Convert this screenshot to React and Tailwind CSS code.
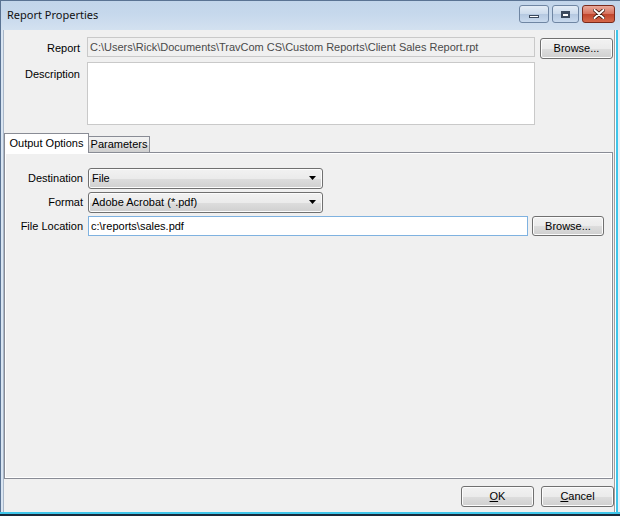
import React from "react";

function VButton({ children, className = "" }) {
  return (
    <div
      className={
        "flex items-center justify-center rounded-[3px] border border-[#707070] bg-[linear-gradient(to_bottom,#f2f2f2_0%,#ebebeb_50%,#dddddd_51%,#cfcfcf_100%)] shadow-[inset_0_0_0_1px_#fcfcfc] text-black " +
        className
      }
    >
      {children}
    </div>
  );
}

function Combo({ value }) {
  return (
    <div className="relative flex h-[21px] w-[235px] items-center rounded-[3px] border border-[#707070] bg-[linear-gradient(to_bottom,#f2f2f2_0%,#ebebeb_50%,#dddddd_51%,#cfcfcf_100%)] shadow-[inset_0_0_0_1px_#fcfcfc] pl-[3px]">
      <span>{value}</span>
      <svg className="absolute right-[5px] top-[7px]" width="8" height="5" viewBox="0 0 8 5">
        <path d="M0 0 H7 L3.5 4 Z" fill="#000" />
      </svg>
    </div>
  );
}

export default function App() {
  return (
    <div className="relative flex h-[516px] w-[620px] flex-col overflow-hidden bg-[#d7e4f2] font-['Liberation_Sans',Arial,sans-serif] text-[11px] text-black">
      {/* Title bar */}
      <div className="flex h-[30px] shrink-0 items-start border-l border-t border-[#5a7393] bg-[linear-gradient(to_bottom,#c2d5ea_0%,#c6d8ec_45%,#d3e1f0_100%)] pl-[6px]">
        <span className="mt-[6px] font-['Noto_Sans',sans-serif] text-[11px] leading-[16px] text-[#111]">
          Report Properties
        </span>
        <div className="ml-auto mr-[5px] mt-[4px] flex gap-[3px]">
          <div className="flex h-[18px] w-[30px] items-center justify-center rounded-[3px] border border-[#6f86a3] bg-[linear-gradient(to_bottom,#e3ecf6_0%,#ccdbec_50%,#b4c8e0_51%,#c9daee_100%)]">
            <div className="mt-[5px] h-[3px] w-[10px] border border-[#3b4a5e] bg-white" />
          </div>
          <div className="flex h-[18px] w-[27px] items-center justify-center rounded-[3px] border border-[#6f86a3] bg-[linear-gradient(to_bottom,#e3ecf6_0%,#ccdbec_50%,#b4c8e0_51%,#c9daee_100%)]">
            <div className="h-[7px] w-[9px] border-[2px] border-[#3b4a5e] border-t-[3px] bg-white" />
          </div>
          <div className="flex h-[18px] w-[33px] items-center justify-center rounded-[3px] border border-[#7a2a1c] bg-[linear-gradient(to_bottom,#e9a99a_0%,#d7705c_50%,#c0452d_51%,#d6684a_100%)]">
            <svg width="12" height="10" viewBox="0 0 12 10">
              <path d="M1.5 1 L10.5 9 M10.5 1 L1.5 9" stroke="#3a1208" strokeWidth="3.6" strokeLinecap="round" />
              <path d="M1.5 1 L10.5 9 M10.5 1 L1.5 9" stroke="#ffffff" strokeWidth="2" strokeLinecap="round" />
            </svg>
          </div>
        </div>
      </div>

      {/* Frame + client */}
      <div className="flex min-h-0 flex-1">
        <div className="w-[4px] shrink-0 border-l border-[#5a7393] bg-[#d9e5f2] border-r border-r-[#a9b7c8]" />
        <div className="flex min-w-0 flex-1 flex-col bg-[#f0f0f0]">
          {/* Report row */}
          <div className="mt-[7px] flex items-start">
            <div className="w-[79px] pr-[3px] pt-[3px] text-right">Report</div>
            <div className="ml-[4px] flex h-[20px] w-[448px] items-center border border-[#c9c9c9] bg-[#f0f0f0] pl-[2px] text-[#4a4a4a]">
              C:\Users\Rick\Documents\TravCom CS\Custom Reports\Client Sales Report.rpt
            </div>
            <VButton className="ml-[5px] mt-[1px] h-[21px] w-[73px]">Browse...</VButton>
          </div>
          {/* Description row */}
          <div className="mt-[3px] flex items-start">
            <div className="w-[79px] pr-[3px] pt-[4px] text-right">Description</div>
            <div className="ml-[4px] h-[63px] w-[448px] border border-[#c9c9c9] bg-white" />
          </div>

          {/* Tabs */}
          <div className="mt-[8px] flex h-[19px] items-end">
            <div className="relative z-10 -mb-[1px] flex h-[20px] w-[85px] items-center justify-center border border-b-0 border-[#898c95] bg-white pb-[1px]">
              Output Options
            </div>
            <div className="flex h-[16px] w-[61px] items-center justify-center border border-b-0 border-l-0 border-[#898c95] bg-[linear-gradient(to_bottom,#f2f2f2_0%,#ebebeb_50%,#dddddd_51%,#cfcfcf_100%)]">
              Parameters
            </div>
          </div>
          <div className="mr-[1px] flex h-[327px] flex-col border border-[#898c95] bg-[#f0f0f0] shadow-[inset_0_0_0_1px_#ffffff]">
            <div className="mt-[15px] flex items-center">
              <div className="w-[78px] text-right">Destination</div>
              <div className="ml-[5px]">
                <Combo value="File" />
              </div>
            </div>
            <div className="mt-[3px] flex items-center">
              <div className="w-[78px] text-right">Format</div>
              <div className="ml-[5px]">
                <Combo value="Adobe Acrobat (*.pdf)" />
              </div>
            </div>
            <div className="mt-[3px] flex items-center">
              <div className="w-[78px] text-right">File Location</div>
              <div className="ml-[5px] flex h-[20px] w-[440px] items-center border border-[#7fb2e0] bg-white pl-[2px]">
                c:\reports\sales.pdf
              </div>
              <VButton className="ml-[4px] h-[20px] w-[72px]">Browse...</VButton>
            </div>
          </div>

          {/* Bottom buttons */}
          <div className="mt-[7px] flex justify-end gap-[7px]">
            <VButton className="h-[21px] w-[73px]">
              <span className="underline underline-offset-[1px]">O</span>K
            </VButton>
            <VButton className="h-[21px] w-[73px]">
              <span className="underline underline-offset-[1px]">C</span>ancel
            </VButton>
          </div>
        </div>
        <div className="flex w-[6px] shrink-0">
          <div className="w-[1px] bg-[#a0a0a0]" />
          <div className="w-[1px] bg-[#ffffff]" />
          <div className="w-[2px] bg-[#3fc6ea]" />
          <div className="flex-1 bg-[#e8f0f8]" />
        </div>
      </div>
      <div className="h-[4px] shrink-0 border-t-[2px] border-[#3fc6ea] bg-[#1b2a3a]" />
    </div>
  );
}
